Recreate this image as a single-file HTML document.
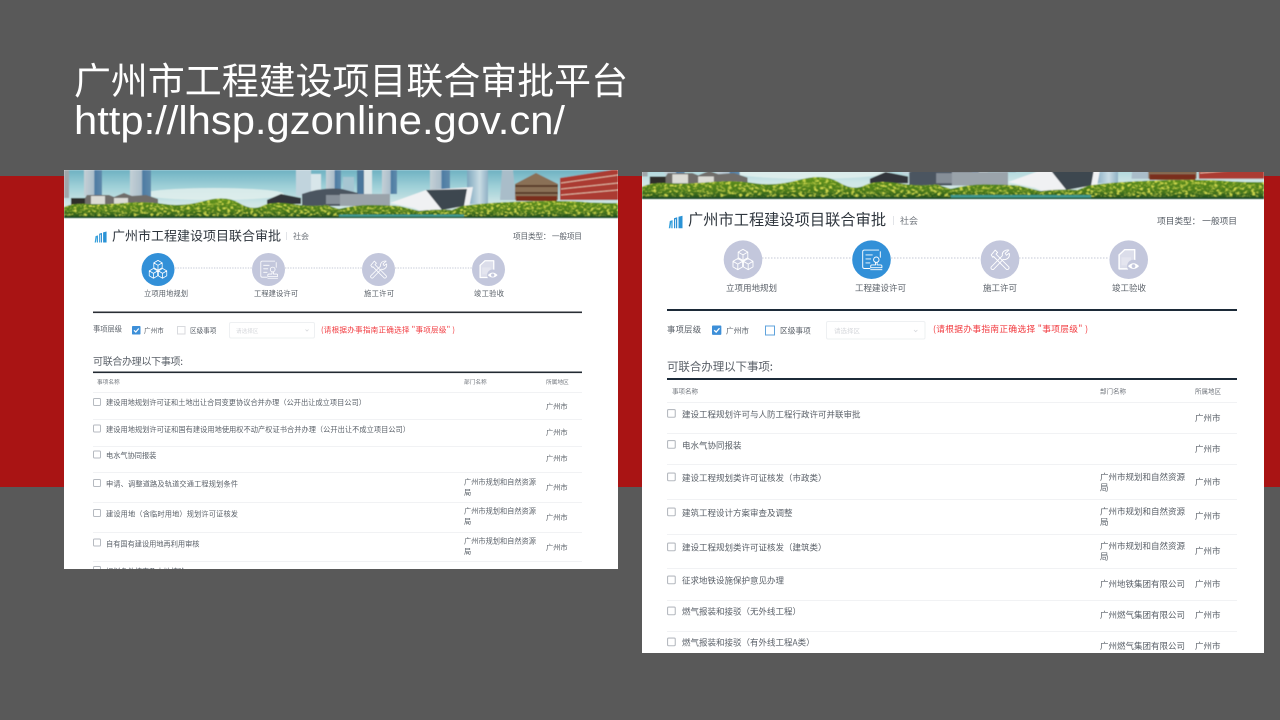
<!DOCTYPE html>
<html lang="zh-CN">
<head>
<meta charset="utf-8">
<title>广州市工程建设项目联合审批平台</title>
<style>
html,body{margin:0;padding:0;width:1280px;height:720px;overflow:hidden;background:#595959}
svg{display:block;position:absolute;left:0;top:0}
text{font-family:"Liberation Sans","Noto Sans CJK SC",sans-serif}
.cjk{font-family:"Noto Sans CJK SC","Liberation Sans",sans-serif}
.t{fill:#5a6068}
.d{fill:#2f363e}
.g{fill:#70757c}
.r{fill:#f23a3f}
.i{fill:none;stroke:#fff;stroke-width:1.150;stroke-linejoin:round;stroke-linecap:round}
</style>
</head>
<body>
<svg width="1280" height="720" viewBox="0 0 1280 720" xmlns="http://www.w3.org/2000/svg">
<defs>
<filter id="soft" x="-2%" y="-2%" width="104%" height="104%"><feGaussianBlur stdDeviation="0.36"/></filter>
<filter id="soft2" x="-2%" y="-2%" width="104%" height="104%"><feGaussianBlur stdDeviation="0.5"/></filter>
<filter id="leaf" x="0" y="0" width="100%" height="100%">
<feTurbulence type="fractalNoise" baseFrequency="0.3 0.45" numOctaves="3" seed="8"/>
<feColorMatrix type="matrix" values="0 0 0 0 0.66  0 0 0 0 0.72  0 0 0 0 0.08  2.6 2.6 0 0 -2.5"/>
<feComposite in2="SourceAlpha" operator="in"/>
</filter>
<linearGradient id="sky" x1="0" y1="0" x2="0" y2="1">
<stop offset="0" stop-color="#6fb2c2"/><stop offset=".35" stop-color="#9fd0d8"/><stop offset=".7" stop-color="#cfe6e6"/><stop offset="1" stop-color="#d8eae6"/>
</linearGradient>
<linearGradient id="grn" x1="0" y1="0" x2="0" y2="1">
<stop offset="0" stop-color="#62931a"/><stop offset=".65" stop-color="#47781a"/><stop offset="1" stop-color="#1c4a20"/>
</linearGradient>
<linearGradient id="tw" x1="0" y1="0" x2="1" y2="0">
<stop offset="0" stop-color="#c4d0d6"/><stop offset=".55" stop-color="#aabdca"/><stop offset=".6" stop-color="#4d7ba3"/><stop offset="1" stop-color="#5f8aab"/>
</linearGradient>
<linearGradient id="cyl" x1="0" y1="0" x2="1" y2="0">
<stop offset="0" stop-color="#7ea6bd"/><stop offset=".6" stop-color="#c9dce4"/><stop offset="1" stop-color="#8fb0c4"/>
</linearGradient>

<symbol id="banner" viewBox="0 0 554 48" width="554" height="48" overflow="hidden">
<rect width="554" height="48" fill="url(#sky)"/>
<ellipse cx="150" cy="24" rx="70" ry="6" fill="#e4f0ee" opacity=".8"/>
<rect x="0" y="0" width="5" height="28" fill="#a0a6aa"/>
<rect x="20" y="0" width="18" height="26" fill="url(#tw)"/>
<rect x="66" y="0" width="21" height="28" fill="url(#tw)"/>
<path d="M7 28h14l2-3h22l5 2 10-4 8 3 14-1 12 4v8H7z" fill="#6f6d6a"/>
<path d="M7 28h14v7H7z" fill="#2f2d2c"/>
<path d="M27 26h14v8H27zM50 28h14v6H50z" fill="#dcdcd6"/>
<rect x="232" y="0" width="15" height="26" fill="#c1d4dd"/>
<rect x="247" y="4" width="10" height="20" fill="#d8e6ea"/>
<rect x="262" y="0" width="15" height="20" fill="url(#tw)"/>
<rect x="279" y="7" width="11" height="16" fill="#a6c6d2"/>
<rect x="293" y="0" width="7" height="24" fill="#4d7795"/>
<path d="M203 30l14-6 20 4v6h-34z" fill="#33363a"/>
<path d="M238 36v-12q20-7 40-5l28 7v10z" fill="#4c5560"/>
<path d="M262 25h44v9h-44z" fill="#868f98"/>
<rect x="294" y="0" width="5" height="24" fill="#4a769c"/>
<rect x="300" y="0" width="8" height="24" fill="#dce6e8"/>
<rect x="318" y="0" width="15" height="24" fill="url(#tw)"/>
<path d="M276 24h50v12h-50z" fill="#9aa3aa"/>
<rect x="366" y="0" width="20" height="20" fill="url(#tw)"/>
<rect x="403" y="0" width="21" height="34" fill="url(#cyl)"/>
<path d="M326 33 362 20 409 17 405 38 380 38 366 45 350 38Z" fill="#f0f1f3"/>
<path d="M362 20 403 19 400 36 378 40Z" fill="#3c4650"/>
<path d="M438 0h11l3 30h-16z" fill="#a9bdc9"/>
<path d="M451 14l21-11 22 11v16h-43z" fill="#8a6f56"/>
<path d="M451 15h43v2h-43zM451 22h43v2h-43z" fill="#5a3d2b"/>
<path d="M452 26h41v5h-41z" fill="#7a2e1e"/>
<path d="M496 8l52-8h6v30h-58z" fill="#ab3b30"/>
<path d="M497 13l57-8M497 19l57-6M497 25l57-5" stroke="#e0b8a6" stroke-width="1" fill="none"/>
<path d="M0 37Q10 33 24 34T60 33T100 34T140 31T175 33T198 36T228 34T262 35L275 39Q292 35 305 35T335 36L355 41Q370 39 388 40L398 36Q420 33 445 32T490 31T520 32T554 33V48H0Z" fill="url(#grn)"/>
<path d="M0 37Q10 33 24 34T60 33T100 34T140 31T175 33T198 36T228 34T262 35L275 39Q292 35 305 35T335 36L355 41Q370 39 388 40L398 36Q420 33 445 32T490 31T520 32T554 33V46H0Z" fill="#000" filter="url(#leaf)"/>
<rect x="275" y="44.500" width="125" height="3.500" fill="#3f9a90"/>
<rect x="0" y="46.800" width="554" height="1.200" fill="#1c4a2b"/>
</symbol>

<symbol id="logo" viewBox="0 0 15 13" overflow="visible">
<path d="M.8 12.800 1.800 5.500 4.600 4.600V12.800H3.300V6.200L2.300 12.800Z" fill="#35a0dc"/>
<path d="M6 12.800V2.800L9.200 1.800V12.800H8V3.600L7.200 3.900V12.800Z" fill="#2b8fd4"/>
<path d="M10.500 12.800V1.200L14.500 .2V12.800Z" fill="#2b93d6"/>
</symbol>

<g id="cubes">
<path class="i" d="M0-13 6-9.500V-2.500L0 1-6-2.500V-9.500ZM-6-9.500 0-6 6-9.500M0-6V1"/>
<path class="i" d="M-6.500-1.500-.5 2V9L-6.500 12.500-12.500 9V2ZM-12.500 2-6.500 5.500-.5 2M-6.500 5.500V12.500"/>
<path class="i" d="M6.500-1.500 12.500 2V9L6.500 12.500 .5 9V2ZM.5 2 6.500 5.500 12.500 2M6.500 5.500V12.500"/>
</g>
<g id="stamp">
<path class="i" d="M9-12H-9a2 2 0 0 0-2 2V9a2 2 0 0 0 2 2H-2M11-10V-3"/>
<path class="i" d="M-7-6H1M-7-1H-1M-7 4H-2"/>
<circle class="i" cx="6" cy="0" r="3.400"/>
<path class="i" d="M5 3.500V6.500H0.500A1.500 1.500 0 0 0-1 8V10H13V8A1.500 1.500 0 0 0 11.500 6.500H7V3.500M-1 12.500H13"/>
</g>
<g id="tools">
<path class="i" d="M-11-6-6-12-3-9-5-7 11 9A2.200 2.200 0 0 1 8 12L-8-4-9-3Z"/>
<path class="i" d="M-11 9 3-5C2-9 6-13 11-12L6.500-8 8-5.500 11.500-8C13-3 8 1 4-.5L-8 12A2.200 2.200 0 0 1-11 9Z"/>
</g>
<g id="docEye">
<path d="M-5-12.500H7.500V11.500H-12V-6Z" fill="#fff" fill-opacity=".4" stroke="#fff" stroke-width="1.800" stroke-linejoin="round"/>
<path d="M-9-3H3V7H-9Z" fill="#fff" fill-opacity=".25"/>
<circle cx="6" cy="8" r="8" fill="#c3c7dc"/>
<path d="M-1 8Q6 1 13 8 6 15-1 8Z" fill="#fff"/>
<circle cx="6" cy="8" r="2.300" fill="#c3c7dc"/>
</g>

<g id="box"><rect x=".5" y=".5" width="7" height="7" rx="1" fill="#fff" stroke="#b6bac0" stroke-width="1"/></g>
<g id="chk"><rect width="8.500" height="8.500" rx=".8" fill="#3c8fd8"/><path d="M2 4.300 3.800 6 6.800 2.500" fill="none" stroke="#fff" stroke-width="1.200"/></g>
</defs>

<rect width="1280" height="720" fill="#595959"/>
<rect y="176" width="1280" height="311" fill="#a91414"/>

<text class="cjk" x="74" y="94" font-size="37" fill="#fff" textLength="554" lengthAdjust="spacingAndGlyphs">广州市工程建设项目联合审批平台</text>
<text x="74" y="134" font-size="40" fill="#fff" textLength="491" lengthAdjust="spacingAndGlyphs">http://lhsp.gzonline.gov.cn/</text>

<!-- LEFT PANEL -->
<svg x="64" y="170" width="554" height="399" viewBox="64 170 554 399">
<rect x="64" y="170" width="554" height="399" fill="#fff"/>
<g filter="url(#soft2)"><use href="#banner" x="64" y="170" width="554" height="48"/></g>
<g filter="url(#soft)">
<use href="#logo" x="94" y="231" width="13" height="12"/>
<text class="d cjk" x="112" y="240.500" font-size="13" textLength="169">广州市工程建设项目联合审批</text>
<rect x="286" y="232" width="1" height="8" fill="#e2e4e8"/>
<text class="g cjk" x="293" y="239" font-size="8">社会</text>
<text class="t cjk" x="513" y="239" font-size="7.700" textLength="69">项目类型： 一般项目</text>

<path d="M175 268H252M285 268H362M395 268H472" stroke="#c4c8d6" stroke-width="1" stroke-dasharray="1.300 1.300"/>
<circle cx="158" cy="269.500" r="16.500" fill="#3390d8"/>
<circle cx="268.500" cy="269.500" r="16.500" fill="#c3c7dc"/>
<circle cx="378.500" cy="269.500" r="16.500" fill="#c3c7dc"/>
<circle cx="488.500" cy="269.500" r="16.500" fill="#c3c7dc"/>
<use href="#cubes" transform="translate(158 269.500) scale(.7)"/>
<use href="#stamp" transform="translate(268.500 269.500) scale(.7)"/>
<use href="#tools" transform="translate(378.500 269.500) scale(.7)"/>
<use href="#docEye" transform="translate(488.500 269.500) scale(.7)"/>
<text class="t cjk" x="144" y="296" font-size="7.300" textLength="44">立项用地规划</text>
<text class="t cjk" x="254" y="296" font-size="7.300" textLength="44">工程建设许可</text>
<text class="t cjk" x="364" y="296" font-size="7.300" textLength="30">施工许可</text>
<text class="t cjk" x="474" y="296" font-size="7.300" textLength="30">竣工验收</text>
<rect x="93" y="311.500" width="489" height="1.600" fill="#2a2f36"/>

<text class="t cjk" x="93" y="331.500" font-size="7.300" textLength="29">事项层级</text>
<use href="#chk" x="132" y="326"/>
<text class="t cjk" x="144" y="333" font-size="6.600">广州市</text>
<rect x="177.500" y="326.500" width="7.500" height="7.500" fill="#fff" stroke="#d8dade"/>
<text class="t cjk" x="190" y="333" font-size="6.600">区级事项</text>
<rect x="229.500" y="322.500" width="85" height="15.500" rx="1.500" fill="#fff" stroke="#eef0f2"/>
<text class="cjk" x="236" y="333" font-size="5.600" fill="#d6d8dc">请选择区</text>
<path d="M305.500 329.500l1.500 1.500 1.500-1.500" stroke="#d6d8dc" fill="none" stroke-width=".8"/>
<text class="r cjk" x="321" y="332.500" font-size="7.600" textLength="134">(请根据办事指南正确选择 "事项层级" )</text>

<text class="t cjk" x="93" y="365" font-size="10" textLength="90">可联合办理以下事项:</text>
<rect x="93" y="371.500" width="489" height="1.600" fill="#232a32"/>
<text class="g cjk" x="97" y="384" font-size="5.700">事项名称</text>
<text class="g cjk" x="464" y="384" font-size="5.700">部门名称</text>
<text class="g cjk" x="546" y="384" font-size="5.700">所属地区</text>
<path d="M93 392.500H582M93 419.500H582M93 446.500H582M93 472.500H582M93 502.500H582M93 532.500H582M93 561.500H582" stroke="#f1f2f4" stroke-width="1"/>

<use href="#box" x="93" y="398"/><use href="#box" x="93" y="424.500"/><use href="#box" x="93" y="450.500"/><use href="#box" x="93" y="479"/><use href="#box" x="93" y="509"/><use href="#box" x="93" y="538.500"/><use href="#box" x="93" y="566"/>
<g class="t" font-size="7.200">
<text class="t cjk" x="106" y="405" textLength="260">建设用地规划许可证和土地出让合同变更协议合并办理（公开出让成立项目公司）</text>
<text class="t cjk" x="106" y="432" textLength="304">建设用地规划许可证和国有建设用地使用权不动产权证书合并办理（公开出让不成立项目公司）</text>
<text class="t cjk" x="106" y="458">电水气协同报装</text>
<text class="t cjk" x="106" y="486.500" textLength="132">申请、调整道路及轨道交通工程规划条件</text>
<text class="t cjk" x="106" y="516.500" textLength="132">建设用地（含临时用地）规划许可证核发</text>
<text class="t cjk" x="106" y="546.500">自有国有建设用地再利用审核</text>
<text class="t cjk" x="106" y="574">规划条件核实及土地核验</text>
<text class="t cjk" x="464" y="484.500">广州市规划和自然资源</text><text class="t cjk" x="464" y="495">局</text>
<text class="t cjk" x="464" y="513.500">广州市规划和自然资源</text><text class="t cjk" x="464" y="524">局</text>
<text class="t cjk" x="464" y="543.500">广州市规划和自然资源</text><text class="t cjk" x="464" y="554">局</text>
<text class="t cjk" x="546" y="409">广州市</text><text class="t cjk" x="546" y="435">广州市</text><text class="t cjk" x="546" y="461">广州市</text><text class="t cjk" x="546" y="490">广州市</text><text class="t cjk" x="546" y="520">广州市</text><text class="t cjk" x="546" y="550">广州市</text>
</g>
</g>
</svg>

<!-- RIGHT PANEL -->
<svg x="642" y="172" width="622" height="481" viewBox="642 172 622 481">
<rect x="642" y="172" width="622" height="481" fill="#fff"/>
<g filter="url(#soft2)"><use href="#banner" x="642" y="145" width="622" height="54"/></g>
<g filter="url(#soft)">
<use href="#logo" x="668" y="215.500" width="15" height="13"/>
<text class="d cjk" x="688" y="225" font-size="15.200" textLength="198">广州市工程建设项目联合审批</text>
<rect x="893" y="216" width="1" height="9" fill="#e2e4e8"/>
<text class="g cjk" x="900" y="224" font-size="9">社会</text>
<text class="t cjk" x="1157" y="224" font-size="8.800" textLength="80">项目类型： 一般项目</text>

<path d="M762 258H852M891 258H981M1019 258H1109" stroke="#c4c8d6" stroke-width="1.100" stroke-dasharray="1.500 1.500"/>
<circle cx="743" cy="259.700" r="19.300" fill="#c3c7dc"/>
<circle cx="871.500" cy="259.700" r="19.300" fill="#3390d8"/>
<circle cx="1000" cy="259.700" r="19.300" fill="#c3c7dc"/>
<circle cx="1128.700" cy="259.700" r="19.300" fill="#c3c7dc"/>
<use href="#cubes" transform="translate(743 259.700) scale(.8)"/>
<use href="#stamp" transform="translate(871.500 259.700) scale(.8)"/>
<use href="#tools" transform="translate(1000 259.700) scale(.8)"/>
<use href="#docEye" transform="translate(1128.700 259.700) scale(.8)"/>
<text class="t cjk" x="726" y="291" font-size="8.500" textLength="51">立项用地规划</text>
<text class="t cjk" x="855" y="291" font-size="8.500" textLength="51">工程建设许可</text>
<text class="t cjk" x="983" y="291" font-size="8.500" textLength="34">施工许可</text>
<text class="t cjk" x="1112" y="291" font-size="8.500" textLength="34">竣工验收</text>
<rect x="667" y="309" width="570" height="2" fill="#1f2a38"/>

<text class="t cjk" x="667" y="332.500" font-size="8.300" textLength="34">事项层级</text>
<g transform="translate(712 325.500) scale(1.100)"><use href="#chk"/></g>
<text class="t cjk" x="726" y="333.500" font-size="7.700">广州市</text>
<rect x="765.500" y="326" width="9" height="9" fill="#fff" stroke="#5fa3dc" stroke-width="1"/>
<text class="t cjk" x="780" y="333.500" font-size="7.700">区级事项</text>
<rect x="826.500" y="321.500" width="98.500" height="17.500" rx="1.500" fill="#fff" stroke="#eef0f2"/>
<text class="cjk" x="834" y="333" font-size="6.500" fill="#d6d8dc">请选择区</text>
<path d="M914 330l1.700 1.700 1.700-1.700" stroke="#d6d8dc" fill="none" stroke-width=".8"/>
<text class="r cjk" x="933" y="332" font-size="8.700" textLength="155">(请根据办事指南正确选择 "事项层级" )</text>

<text class="t cjk" x="667" y="370.500" font-size="11.500" textLength="106">可联合办理以下事项:</text>
<rect x="667" y="378" width="570" height="2" fill="#1f2a38"/>
<text class="g cjk" x="672" y="393.500" font-size="6.500">事项名称</text>
<text class="g cjk" x="1100" y="393.500" font-size="6.500">部门名称</text>
<text class="g cjk" x="1195" y="393.500" font-size="6.500">所属地区</text>
<path d="M667 402.500H1237M667 433.500H1237M667 464.500H1237M667 499.500H1237M667 534.500H1237M667 568.500H1237M667 600.500H1237M667 631.500H1237" stroke="#f1f2f4" stroke-width="1"/>

<g transform="translate(667 409) scale(1.100)"><use href="#box"/></g>
<g transform="translate(667 440) scale(1.100)"><use href="#box"/></g>
<g transform="translate(667 472.500) scale(1.100)"><use href="#box"/></g>
<g transform="translate(667 507.500) scale(1.100)"><use href="#box"/></g>
<g transform="translate(667 542.500) scale(1.100)"><use href="#box"/></g>
<g transform="translate(667 575.500) scale(1.100)"><use href="#box"/></g>
<g transform="translate(667 606.500) scale(1.100)"><use href="#box"/></g>
<g transform="translate(667 637.500) scale(1.100)"><use href="#box"/></g>
<g font-size="8.500">
<text class="t cjk" x="682" y="417.500">建设工程规划许可与人防工程行政许可并联审批</text>
<text class="t cjk" x="682" y="448.500">电水气协同报装</text>
<text class="t cjk" x="682" y="481">建设工程规划类许可证核发（市政类）</text>
<text class="t cjk" x="682" y="516">建筑工程设计方案审查及调整</text>
<text class="t cjk" x="682" y="550.500">建设工程规划类许可证核发（建筑类）</text>
<text class="t cjk" x="682" y="583.500">征求地铁设施保护意见办理</text>
<text class="t cjk" x="682" y="614.500">燃气报装和接驳（无外线工程）</text>
<text class="t cjk" x="682" y="645.500">燃气报装和接驳（有外线工程A类）</text>
<text class="t cjk" x="1100" y="480">广州市规划和自然资源</text><text class="t cjk" x="1100" y="490.500">局</text>
<text class="t cjk" x="1100" y="514.500">广州市规划和自然资源</text><text class="t cjk" x="1100" y="525">局</text>
<text class="t cjk" x="1100" y="549">广州市规划和自然资源</text><text class="t cjk" x="1100" y="559.500">局</text>
<text class="t cjk" x="1100" y="587">广州地铁集团有限公司</text>
<text class="t cjk" x="1100" y="618">广州燃气集团有限公司</text>
<text class="t cjk" x="1100" y="649">广州燃气集团有限公司</text>
<text class="t cjk" x="1195" y="421">广州市</text><text class="t cjk" x="1195" y="452">广州市</text><text class="t cjk" x="1195" y="485">广州市</text><text class="t cjk" x="1195" y="519">广州市</text><text class="t cjk" x="1195" y="554">广州市</text><text class="t cjk" x="1195" y="587">广州市</text><text class="t cjk" x="1195" y="618">广州市</text><text class="t cjk" x="1195" y="649">广州市</text>
</g>
</g>
</svg>
</svg>
</body>
</html>
